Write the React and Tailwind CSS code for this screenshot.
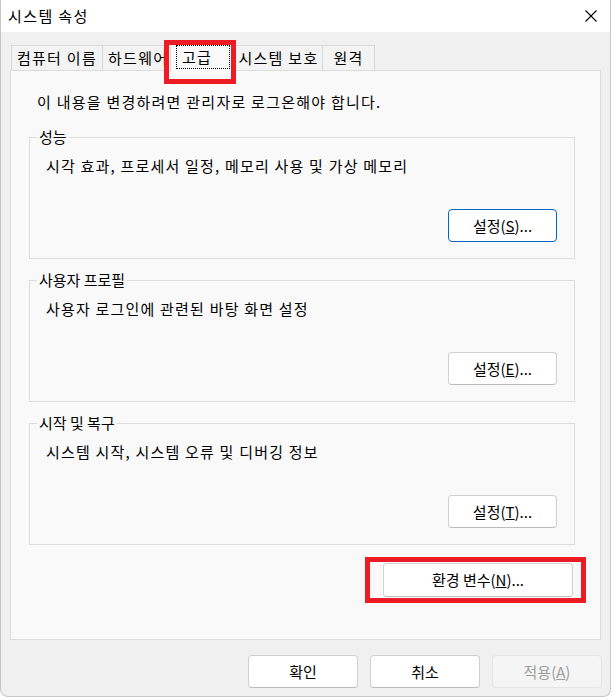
import React from "react";

const FONT = "font-['Noto_Sans_CJK_KR','Malgun_Gothic',sans-serif]";

function WinButton({ children, className = "", primary = false, disabled = false }) {
  return (
    <div
      className={`flex items-center justify-center rounded-[4px] border text-[15px] leading-[20px] ${
        disabled
          ? "bg-[#f5f5f5] border-[#e5e5e5] text-[#9d9d9d]"
          : primary
          ? "bg-white border-[#0067c0] text-black"
          : "bg-white border-[#d0d0d0] border-b-[#bcbcbc] text-black"
      } ${className}`}
    >
      {children}
    </div>
  );
}

function Group({ title, text, children, className = "" }) {
  return (
    <div className={`relative ml-[18px] w-[546px] h-[122px] border border-[#dcdcdc] flex flex-col ${className}`}>
      <span className="absolute left-[7px] -top-[11px] px-[2px] bg-[#f9f9f9] text-[15px] leading-[20px] text-black">
        {title}
      </span>
      <div className="pl-[16px] pt-[18px] text-[15px] leading-[20px] tracking-[1.2px] text-black">{text}</div>
      <div className="mt-auto self-end mr-[17px] mb-[16px]">{children}</div>
    </div>
  );
}

export default function App() {
  return (
    <div className={`relative w-[613px] h-[699px] bg-white ${FONT}`}>
      <div className="w-[611px] h-[697px] flex flex-col border-x border-b border-[#c6c6c6] rounded-b-[8px] overflow-hidden bg-[#f0f0f0]">
        {/* Title bar */}
        <div className="h-[32px] bg-white flex items-center justify-between pl-[7px] pr-[13px]">
          <span className="text-[15px] leading-[20px] tracking-[1.4px] text-black">시스템 속성</span>
          <svg width="12" height="12" viewBox="0 0 12 12" className="block">
            <path d="M0.5 0.5 L11.5 11.5 M11.5 0.5 L0.5 11.5" stroke="#000" strokeWidth="1.1" fill="none" />
          </svg>
        </div>

        {/* Tabs */}
        <div className="h-[38px] pt-[11px] pl-[10px] flex items-end text-[15px] leading-[20px] tracking-[1.3px] text-black">
          <div className="w-[92px] h-[25px] border-t border-x border-[#d9d9d9] bg-[#f3f3f3] flex items-center justify-center whitespace-nowrap">
            컴퓨터 이름
          </div>
          <div className="-ml-px w-[70px] h-[25px] border-t border-x border-[#d9d9d9] bg-[#f3f3f3] flex items-center pl-[5px] overflow-hidden whitespace-nowrap">
            하드웨어
          </div>
          <div className="relative z-10 -ml-[2px] -mb-px w-[65px] h-[28px] border-t border-x border-[#d9d9d9] bg-[#f9f9f9] pl-[5px] pt-[1px]">
            <div className="w-[54px] h-[24px] border border-dotted border-black pl-[5px] flex items-center">
              고급
            </div>
          </div>
          <div className="-ml-px w-[89px] h-[25px] border-t border-x border-[#d9d9d9] bg-[#f3f3f3] flex items-center justify-center whitespace-nowrap">
            시스템 보호
          </div>
          <div className="-ml-px w-[53px] h-[25px] border-t border-x border-[#d9d9d9] bg-[#f3f3f3] flex items-center justify-center">
            원격
          </div>
        </div>

        {/* Panel */}
        <div className="ml-[9px] w-[591px] h-[570px] border border-[#dcdcdc] bg-[#f9f9f9] flex flex-col">
          <div className="pl-[26px] pt-[21px] text-[15px] leading-[20px] tracking-[1.25px] text-black">
            이 내용을 변경하려면 관리자로 로그온해야 합니다.
          </div>

          <Group className="mt-[25px]" title="성능" text="시각 효과, 프로세서 일정, 메모리 사용 및 가상 메모리">
            <WinButton primary className="w-[109px] h-[33px]">
              설정(<span className="underline">S</span>)...
            </WinButton>
          </Group>

          <Group className="mt-[21px]" title="사용자 프로필" text="사용자 로그인에 관련된 바탕 화면 설정">
            <WinButton className="w-[109px] h-[33px]">
              설정(<span className="underline">E</span>)...
            </WinButton>
          </Group>

          <Group className="mt-[21px]" title="시작 및 복구" text="시스템 시작, 시스템 오류 및 디버깅 정보">
            <WinButton className="w-[109px] h-[33px]">
              설정(<span className="underline">T</span>)...
            </WinButton>
          </Group>

          <div className="mt-[18px] self-end mr-[27px]">
            <WinButton className="w-[190px] h-[34px]">
              환경 변수(<span className="underline">N</span>)...
            </WinButton>
          </div>
        </div>

        {/* Bottom buttons */}
        <div className="mt-[15px] flex justify-end gap-[12px] pr-[8px]">
          <WinButton className="w-[110px] h-[33px]">확인</WinButton>
          <WinButton className="w-[110px] h-[33px]">취소</WinButton>
          <WinButton disabled className="w-[110px] h-[33px]">
            적용(<span className="underline">A</span>)
          </WinButton>
        </div>
      </div>

      {/* Red annotation boxes */}
      <div className="pointer-events-none absolute left-[164px] top-[40px] w-[72px] h-[44px] border-[5px] border-[#ed1c24] z-20" />
      <div className="pointer-events-none absolute left-[365px] top-[557px] w-[221px] h-[46px] border-[5px] border-[#ed1c24] z-20" />
    </div>
  );
}
